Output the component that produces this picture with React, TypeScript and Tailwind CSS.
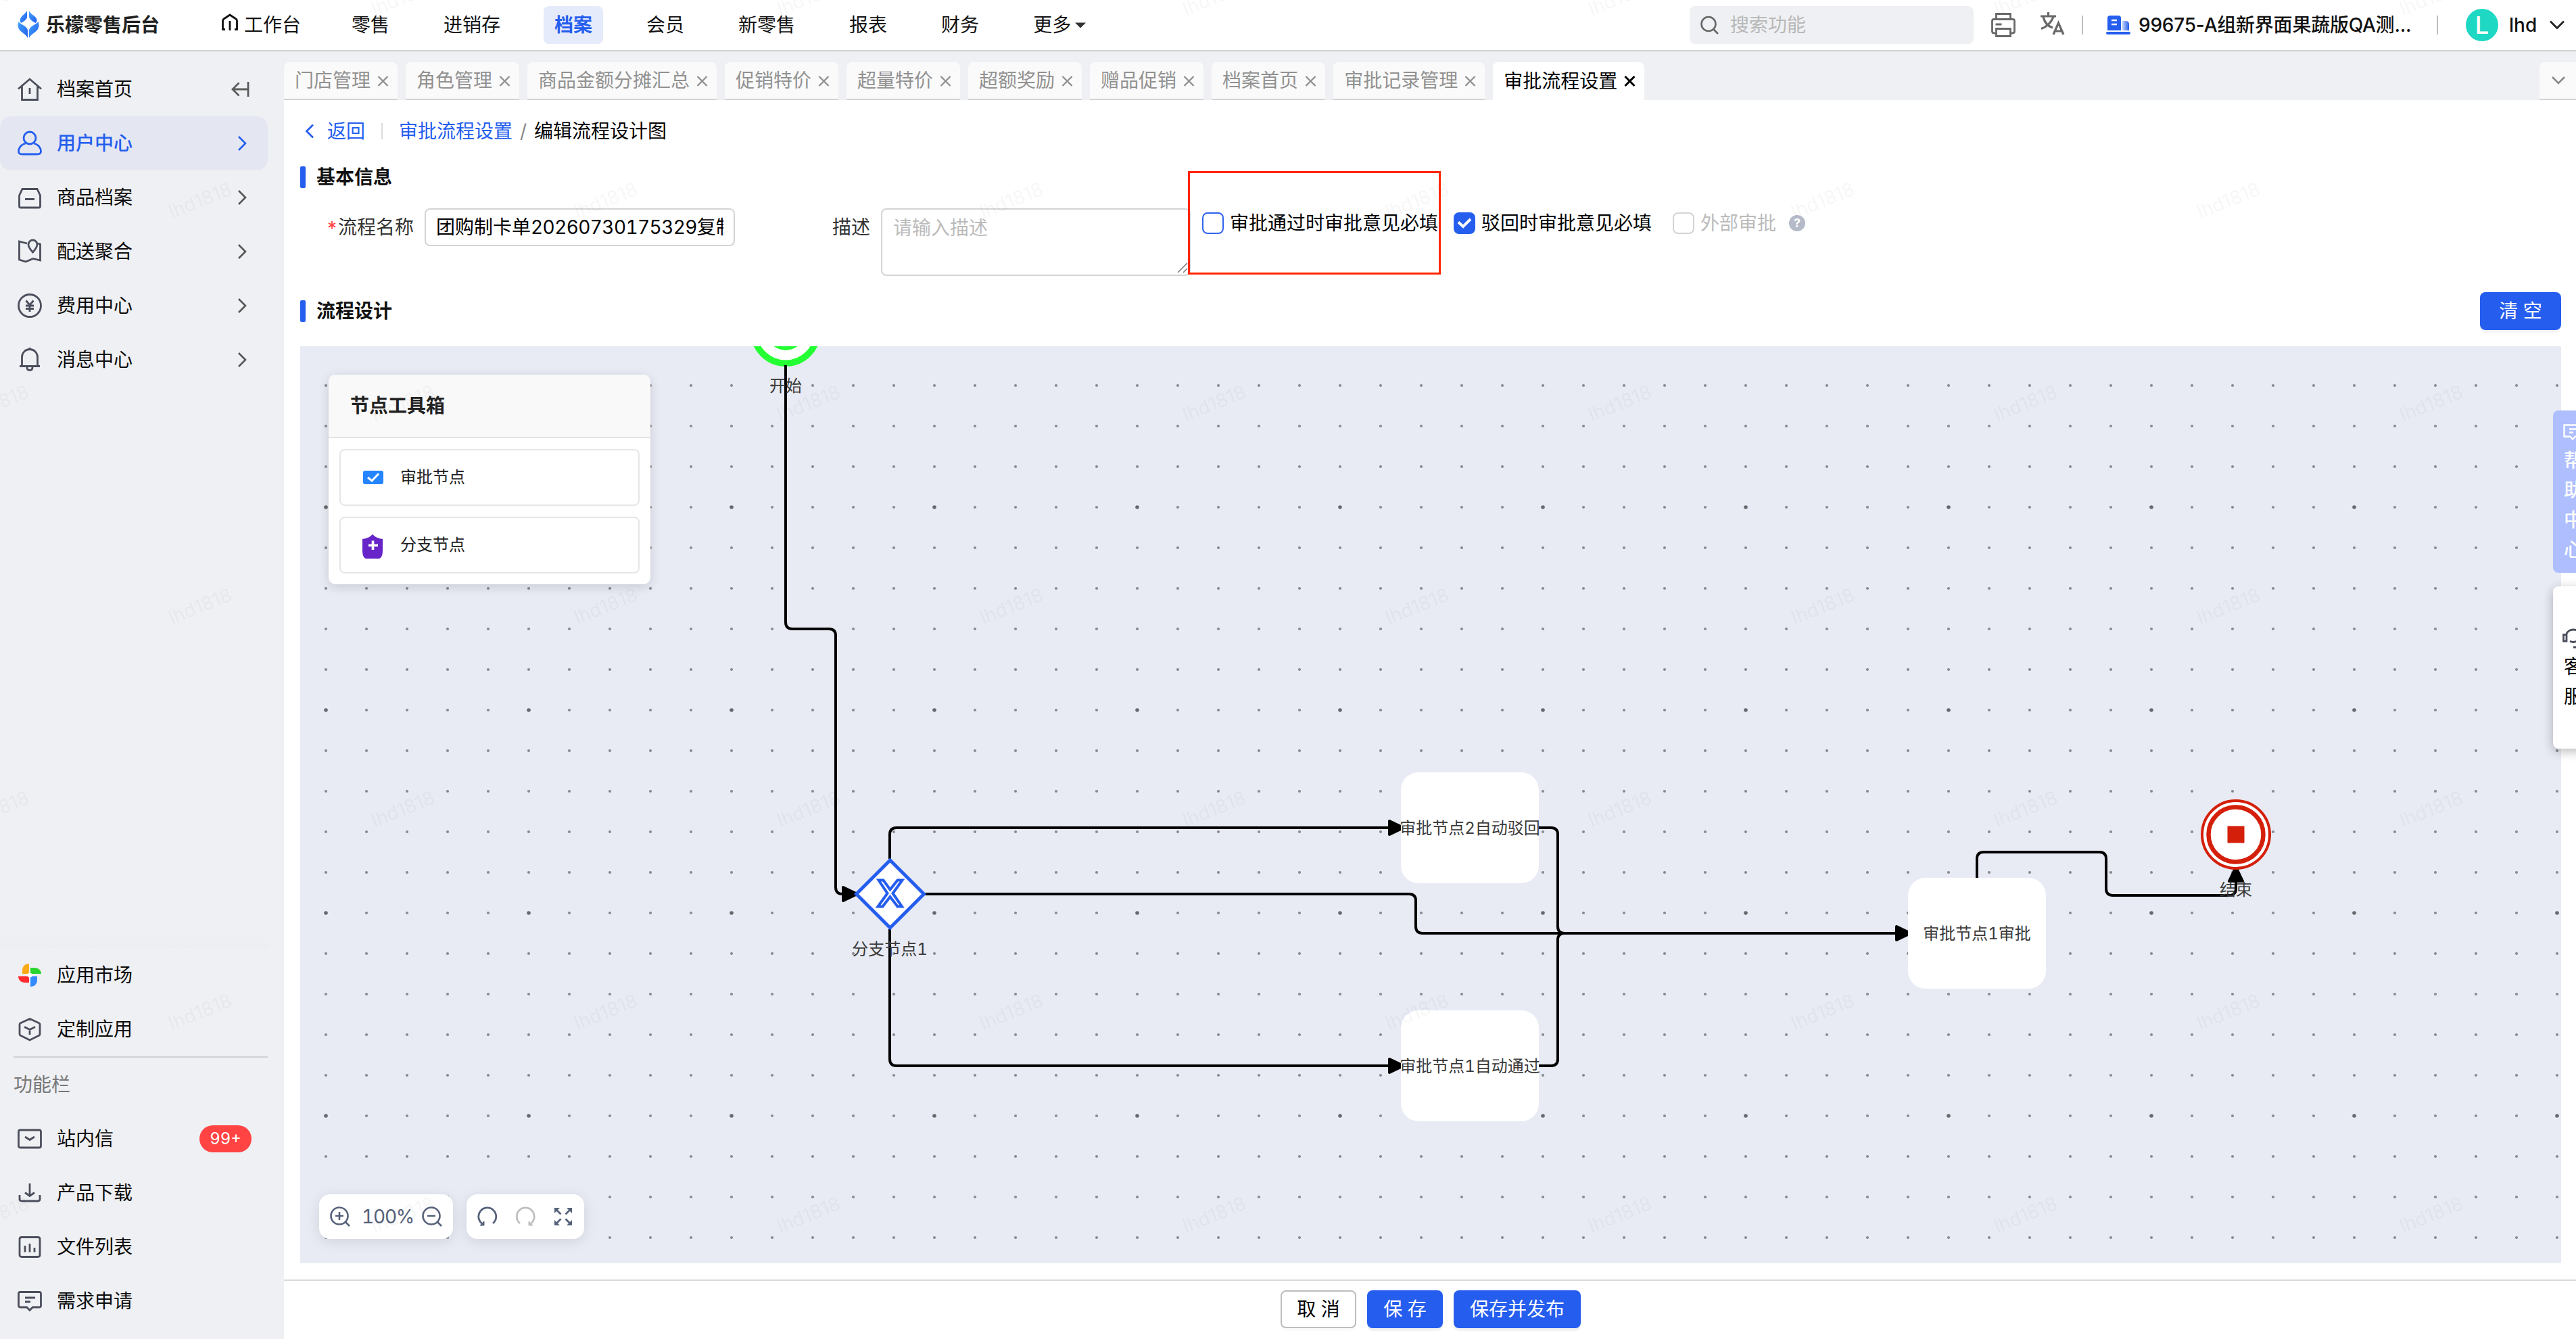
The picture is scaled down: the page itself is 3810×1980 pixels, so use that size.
import React from "react";

const NAV = ["零售", "进销存", "档案", "会员", "新零售", "报表", "财务"];

const TABS = [
  "门店管理",
  "角色管理",
  "商品金额分摊汇总",
  "促销特价",
  "超量特价",
  "超额奖励",
  "赠品促销",
  "档案首页",
  "审批记录管理",
  "审批流程设置",
];

function SideIcon({ name }: { name: string }) {
  const shapes: Record<string, React.ReactNode> = {
    home: <path d="M2 18.500L19 4L36 18.500M7.500 15V34.500H30.500V15M19 17V26" />,
    user: (
      <>
        <circle cx="19" cy="11" r="9" />
        <path d="M13 19C6 20.500 2.500 26 2.500 31C2.500 34 4.500 35 8 35H30C33.500 35 35.500 34 35.500 31C35.500 26 32 20.500 25 19" />
      </>
    ),
    archive: <path d="M8 6.500H30L34.500 16V32Q34.500 34 32.500 34H5.500Q3.500 34 3.500 32V16ZM12 21.500H26" />,
    delivery: (
      <path d="M15 7L3.500 4V31L13 34L24 29.500L34.500 32V8L31 7M23.500 20C19 15 17 12 17 8.500A6.500 6.500 0 0 1 30 8.500C30 12 28 15 23.500 20Z" />
    ),
    fee: (
      <>
        <circle cx="19" cy="19" r="16.500" />
        <path d="M13.500 11.500L19 18L24.500 11.500M19 18V28M13 19H25M13 23.500H25" />
      </>
    ),
    bell: <path d="M7.500 28V15A11.500 11.500 0 0 1 30.500 15V28M4 28.500H34M15 30Q15 34.500 19 34.500Q23 34.500 23 30M19 1V4" />,
    box: <path d="M19 3.500L33 10Q34 10.500 34 12V26Q34 27.500 33 28L19 35L5 28Q4 27.500 4 26V12Q4 10.500 5 10ZM11 15.500L19 19.500L27 15.500M19 19.500V27" />,
    mail: <path d="M5 6H33Q35.500 6 35.500 8.500V29.500Q35.500 32 33 32H5Q2.500 32 2.500 29.500V8.500Q2.500 6 5 6ZM12 16L19 20.500L26 16" />,
    download: <path d="M19 5V23M12 18.500L19 23.500L26 18.500M4 22V28Q4 31 7 31H31Q34 31 34 28V22" />,
    chart: <path d="M7 4.500H31Q34 4.500 34 7.500V30.500Q34 33.500 31 33.500H7Q4 33.500 4 30.500V7.500Q4 4.500 7 4.500ZM12 17V26.500M19 14V26.500M26 20V26.500" />,
    feedback: <path d="M5 5.500H33Q35.500 5.500 35.500 8V26Q35.500 28 33 28H23.500L19 32.500L14.500 28H5Q2.500 28 2.500 26V8Q2.500 5.500 5 5.500ZM12 14H27M12 20H20" />,
  };
  if (name === "market") {
    return (
      <svg className="size-[38px] shrink-0" viewBox="0 0 38 38">
        <path fill="#fcab17" d="M18 2V17H8V12C8 6 12 2 18 2Z" />
        <path fill="#2bd52f" d="M20 8H26C32 8 36 12 36 17H20Z" />
        <path fill="#ff2b2f" d="M18 30H12C6 30 2 26 2 20.500H18Z" />
        <path fill="#338bff" d="M20 36V20.500H30V26C30 32 26 36 20 36Z" />
        <circle cx="19" cy="19" r="3.500" fill="#fff" />
      </svg>
    );
  }
  return (
    <svg className="size-[38px] shrink-0" viewBox="0 0 38 38" fill="none" stroke="currentColor" strokeWidth="2.800">
      {shapes[name]}
    </svg>
  );
}

function SideRow({ icon, label, active, arrow, badge }: { icon: string; label: string; active?: boolean; arrow?: boolean; badge?: string }) {
  return (
    <div
      className={
        active
          ? "flex h-20 w-[396px] items-center rounded-[16px] bg-[#e4e7f2] pl-[25px] text-[#255eee]"
          : "flex h-20 w-[396px] items-center pl-[25px] text-[#4b4e5c]"
      }
    >
      <SideIcon name={icon} />
      <span className={active ? "ml-[21px] font-medium" : "ml-[21px] text-[#0b0b0b]"}>{label}</span>
      {icon === "home" && (
        <svg className="mr-[27px] ml-auto h-6 w-7" viewBox="0 0 28 24" fill="none" stroke="#5c5c5c" strokeWidth="2.800">
          <path d="M26 1V23M26 12H3M12.500 2.500L3 12L12.500 21.500" />
        </svg>
      )}
      {arrow && (
        <svg className="mr-[30px] ml-auto h-6 w-4" viewBox="0 0 16 24" fill="none" stroke={active ? "#255eee" : "#555"} strokeWidth="2.600">
          <path d="M3 2L13 12L3 22" />
        </svg>
      )}
      {badge && (
        <span className="mr-6 ml-auto flex h-10 w-[77px] items-center justify-center rounded-full bg-[#ff4443] text-[24px] text-white">{badge}</span>
      )}
    </div>
  );
}

function Header() {
  return (
    <header className="flex h-[76px] shrink-0 items-center border-b-2 border-[#d0d1d3] bg-white pr-4">
      <svg className="mt-[-3px] ml-[26px] h-[42px] w-8 shrink-0" viewBox="0 0 32 42">
        <defs>
          <linearGradient id="logo" x1="0" y1="0" x2="1" y2="1">
            <stop offset="0" stopColor="#45a4ff" />
            <stop offset="1" stopColor="#1f5df0" />
          </linearGradient>
        </defs>
        <path fill="url(#logo)" d="M14 1V11C13 14 9 17 5 19C3 16 3 14 5 11C7 7 11 6 14 1Z" />
        <path fill="url(#logo)" d="M17 1C19 6 24 7 27 11C29 14 29 16 27 19C22 17 18 14 17 10Z" />
        <path fill="url(#logo)" d="M1.500 17C4 21 13 23 15 29V41C12 35 5 33 2 28C0 24 0 21 1.500 17Z" />
        <path fill="url(#logo)" d="M30.500 17C28 21 19 23 17 29V41C20 35 27 33 30 28C32 24 32 21 30.500 17Z" />
      </svg>
      <div className="ml-[10px] w-[170px] font-bold text-[#222]">乐檬零售后台</div>
      <div className="ml-[89px] flex items-center">
        <svg className="mt-[-8px] h-[26px] w-[26px]" viewBox="0 0 26 26" fill="none" stroke="#111" strokeWidth="2.800">
          <path d="M6 23.500H2.500V11Q2.500 9 4 8L13 2L22 8Q23.500 9 23.500 11V23.500H20M13 11V25" />
        </svg>
        <span className="ml-2">工作台</span>
      </div>
      <nav className="ml-[59px] flex gap-12">
        {NAV.map((n) => (
          <span
            key={n}
            className={
              n === "档案"
                ? "flex h-14 items-center rounded-lg bg-[#e6ebfb] px-4 font-bold text-[#255eee]"
                : "flex h-14 items-center px-4"
            }
          >
            {n}
          </span>
        ))}
        <span className="flex h-14 items-center pl-4">
          更多
          <svg className="ml-[6px] h-[9px] w-4" viewBox="0 0 16 9">
            <path d="M0 0.500H16L8 8.500Z" fill="#333" />
          </svg>
        </span>
      </nav>
      <div className="ml-auto flex h-14 w-[420px] items-center rounded-lg bg-[#eff0f3] pl-4 text-[#b8b8b8]">
        <svg className="mt-[-1px] size-7" viewBox="0 0 28 28" fill="none" stroke="#666" strokeWidth="2.600">
          <circle cx="12" cy="12.500" r="10.500" />
          <path d="M19.500 20.500L26 27" />
        </svg>
        <span className="ml-4">搜索功能</span>
      </div>
      <svg className="ml-[26px] h-9 w-9" viewBox="0 0 36 36" fill="none" stroke="#686868" strokeWidth="2.800">
        <path d="M7.500 9V1.500H28.500V9M7.500 30H4Q1.500 30 1.500 27V12Q1.500 9.500 4 9.500H32Q34.500 9.500 34.500 12V27Q34.500 30 32 30H28.500M7.500 23.500H28.500V34.500H7.500ZM6.500 17H15.500" />
      </svg>
      <svg className="mt-[-4px] ml-9 h-9 w-[37px]" viewBox="0 0 37 36" fill="none" stroke="#686868" strokeWidth="3.200">
        <path d="M12.500 1V6M1 7H24M5 8C7 16 12 22 19 24M20 8C17 16 10 23 2 25.500M20 34L27.500 17L35 34M22 29H33" />
      </svg>
      <div className="ml-[25px] h-7 w-[2px] bg-[#bdbdbd]" />
      <svg className="ml-[34px] h-7 w-9" viewBox="0 0 36 28">
        <defs>
          <linearGradient id="wing">
            <stop offset="0" stopColor="#c3d2fb" />
            <stop offset="1" stopColor="#255eee" />
          </linearGradient>
        </defs>
        <path fill="#255eee" d="M2 22V4Q2 0 6 0H18Q22 0 22 4V22Z" />
        <path fill="url(#wing)" d="M24 22V8H29Q34 8 34 13V22Z" />
        <rect y="24" width="36" height="4" rx="2" fill="#255eee" />
        <path stroke="#fff" strokeWidth="2.500" d="M8 7H16M8 13H16" />
      </svg>
      <span className="ml-3 w-[404px] font-medium tracking-[-0.22px] whitespace-nowrap normal-nums">99675-A组新界面果蔬版QA测...</span>
      <div className="ml-[37px] h-7 w-[2px] bg-[#bdbdbd]" />
      <div className="ml-[41px] flex size-12 items-center justify-center rounded-full bg-[#1fd8c3] text-[36px] font-medium text-white">L</div>
      <span className="ml-4 w-[43px] font-medium">lhd</span>
      <svg className="ml-4 h-4 w-6" viewBox="0 0 24 16" fill="none" stroke="#222" strokeWidth="2.800">
        <path d="M2 2.500L12 12.500L22 2.500" />
      </svg>
    </header>
  );
}

function Sidebar() {
  return (
    <aside className="flex w-[420px] shrink-0 flex-col bg-[#eff0f3] py-4">
      <SideRow icon="home" label="档案首页" />
      <SideRow icon="user" label="用户中心" active arrow />
      <SideRow icon="archive" label="商品档案" arrow />
      <SideRow icon="delivery" label="配送聚合" arrow />
      <SideRow icon="fee" label="费用中心" arrow />
      <SideRow icon="bell" label="消息中心" arrow />
      <div className="mt-auto h-4 w-[396px] bg-gradient-to-b from-[#eff0f3] to-[#edeef1]" />
      <SideRow icon="market" label="应用市场" />
      <SideRow icon="box" label="定制应用" />
      <div className="ml-5 h-[2px] w-[376px] bg-[#d0d1d4]" />
      <div className="flex h-20 items-center pl-5 text-[#777]">功能栏</div>
      <SideRow icon="mail" label="站内信" badge="99+" />
      <SideRow icon="download" label="产品下载" />
      <SideRow icon="chart" label="文件列表" />
      <SideRow icon="feedback" label="需求申请" />
    </aside>
  );
}

function TabBar() {
  return (
    <div className="flex h-[72px] shrink-0 gap-3 bg-[#eff0f3] pt-4">
      {TABS.map((t, i) => {
        const active = i === TABS.length - 1;
        return (
          <div
            key={t}
            className={
              active
                ? "flex h-14 items-center rounded-t-lg bg-white pl-4 text-black"
                : "flex h-14 items-center rounded-t-lg border-b-2 border-[#d2d3d4] bg-[#fafafa] pl-4 text-[#919191]"
            }
          >
            <span className="whitespace-nowrap">{t}</span>
            <svg className={active ? "mr-[13px] ml-[10px] h-4 w-[17px]" : "mr-[13px] ml-[10px] h-4 w-[17px] translate-y-px"} viewBox="0 0 17 16" stroke="currentColor" strokeWidth={active ? 3 : 2.4}>
              <path d="M1.500 1L15.500 15M15.500 1L1.500 15" />
            </svg>
          </div>
        );
      })}
      <div className="ml-auto flex h-14 w-[54px] items-center rounded-tl-lg border-b-2 border-[#d2d3d4] bg-[#fafafa] pl-[17px]">
        <svg className="h-3 w-[22px]" viewBox="0 0 22 12" fill="none" stroke="#888" strokeWidth="2.600">
          <path d="M2 1L11 10L20 1" />
        </svg>
      </div>
    </div>
  );
}

function SectionTitle({ children }: { children: React.ReactNode }) {
  return (
    <div className="flex items-center">
      <span className="h-8 w-2 rounded-[2px] bg-[#255eee]" />
      <span className="ml-4 font-bold text-[#111]">{children}</span>
    </div>
  );
}

function Check({ checked, disabled }: { checked?: boolean; disabled?: boolean }) {
  if (checked) {
    return (
      <span className="flex size-8 items-center justify-center rounded-lg bg-[#255eee]">
        <svg className="h-4 w-[22px]" viewBox="0 0 22 16" fill="none" stroke="#fff" strokeWidth="4">
          <path d="M2 6.500L9 13L20 2" />
        </svg>
      </span>
    );
  }
  return <span className={disabled ? "size-8 rounded-lg border-2 border-[#d4d4d4] bg-white" : "size-8 rounded-lg border-2 border-[#2f64ee] bg-white"} />;
}

function BasicForm() {
  return (
    <div className="relative flex h-[148px] pt-6">
      <div className="flex h-14 w-[184px] items-center justify-end pr-4 text-[#333]">
        <span className="mt-1 text-[#ff4443] normal-nums">*</span>
        <span className="ml-[2px]">流程名称</span>
      </div>
      <div className="flex h-14 w-[459px] items-center rounded-lg border-2 border-[#d4d4d4] px-[15px] text-black">
        <span className="w-[425px] overflow-hidden whitespace-nowrap">
          团购制卡单<span className="tracking-[-0.6px]">20260730175329</span>复制
        </span>
      </div>
      <div className="flex h-14 w-[216px] items-center justify-end pr-4 text-[#333]">描述</div>
      <div className="relative h-[100px] w-[458px] rounded-lg border-2 border-[#d4d4d4] pt-[7px] pl-[16px] leading-10 text-[#bbb]">
        请输入描述
        <svg className="absolute right-[2px] bottom-[2px] size-4" viewBox="0 0 16 16" stroke="#777" strokeWidth="1.500">
          <path d="M1 15L15 1M9 15L15 9" />
        </svg>
      </div>
      <div className="mt-[6px] ml-[17px] flex h-8 items-center">
        <Check />
        <span className="ml-[9px] text-black">审批通过时审批意见必填</span>
        <span className="w-[23px]" />
        <Check checked />
        <span className="ml-[9px] text-black">驳回时审批意见必填</span>
        <span className="w-[31px]" />
        <Check disabled />
        <span className="ml-[9px] text-[#bbb]">外部审批</span>
        <span className="ml-[19px] flex size-6 items-center justify-center rounded-full bg-[#b4bac8] text-[18px] font-bold text-white">?</span>
      </div>
      <div className="absolute top-[-31px] left-[1313px] h-[153px] w-[374px] border-[3px] border-[#ff2600]" />
    </div>
  );
}

const EDGES = [
  "M1162 540V920Q1162 930 1172 930H1226Q1236 930 1236 940V1312Q1236 1322 1246 1322",
  "M1316 1270V1234Q1316 1224 1326 1224H2056",
  "M1316 1374V1566Q1316 1576 1326 1576H2056",
  "M1368 1322H2084Q2094 1322 2094 1332V1370Q2094 1380 2104 1380H2806",
  "M2276 1224H2294Q2304 1224 2304 1234V1370Q2304 1380 2314 1380",
  "M2276 1576H2294Q2304 1576 2304 1566V1390Q2304 1380 2314 1380",
  "M2924 1298V1270Q2924 1260 2934 1260H3105Q3115 1260 3115 1270V1314Q3115 1324 3125 1324H3297Q3307 1324 3307 1314V1300",
];

const ARROWS = [
  "M1247 1312V1332L1268 1322Z",
  "M2055 1214V1234L2076 1224Z",
  "M2055 1566V1586L2076 1576Z",
  "M2805 1370V1390L2826 1380Z",
  "M3297 1303H3317L3307 1282Z",
];

const CARDS = [
  { x: 2072, y: 1142, label: "审批节点2自动驳回" },
  { x: 2072, y: 1494, label: "审批节点1自动通过" },
  { x: 2822, y: 1298, label: "审批节点1审批" },
];

function FlowDiagram() {
  return (
    <svg className="absolute inset-0 h-full w-full" viewBox="444 512 3344 1356">
      <defs>
        <pattern id="dots" x="452" y="420" width="60" height="60" patternUnits="userSpaceOnUse">
          <circle cx="30" cy="30" r="2.100" fill="#888a90" />
        </pattern>
        <pattern id="major" x="452" y="420" width="300" height="300" patternUnits="userSpaceOnUse">
          <circle cx="30" cy="30" r="2.800" fill="#66686c" />
        </pattern>
      </defs>
      <rect x="444" y="512" width="3344" height="1356" fill="url(#dots)" />
      <rect x="444" y="512" width="3344" height="1356" fill="url(#major)" />
      <circle cx="1162" cy="490" r="47.250" fill="#fff" stroke="#23ff33" strokeWidth="9.500" />
      <circle cx="1162" cy="490" r="28" fill="#23ff33" />
      <g fill="none" stroke="#000" strokeWidth="4">
        {EDGES.map((d) => (
          <path key={d} d={d} />
        ))}
      </g>
      <g stroke="#000" strokeWidth="4" strokeLinejoin="round">
        {ARROWS.map((d) => (
          <path key={d} d={d} />
        ))}
      </g>
      <path d="M1316.500 1272L1366.500 1322L1316.500 1372L1266.500 1322Z" fill="#fff" stroke="#255eee" strokeWidth="5" />
      <path
        d="M1299.500 1301.500H1306.500L1316.500 1315.500L1327.500 1301.500H1334.500L1320.500 1321L1334 1340.500H1327.500L1316.500 1326L1305.500 1340.500H1298.500L1312.500 1321Z"
        fill="#fff"
        stroke="#255eee"
        strokeWidth="4"
      />
      {CARDS.map((c) => (
        <rect key={c.label} x={c.x} y={c.y} width="204" height="164" rx="26" fill="#fff" />
      ))}
      <circle cx="3307" cy="1234" r="50" fill="#fff" stroke="#d41f0b" strokeWidth="4" />
      <circle cx="3307" cy="1234" r="40.500" fill="#fff" stroke="#d41f0b" strokeWidth="6.500" />
      <rect x="3294.500" y="1221.500" width="25" height="25" fill="#d41f0b" />
      <g fill="#3a3a3a" fontSize="24" textAnchor="middle">
        {CARDS.map((c) => (
          <text key={c.label} x={c.x + 102} y={c.y + 91}>
            {c.label}
          </text>
        ))}
        <text x="1162" y="579">开始</text>
        <text x="1316" y="1412">分支节点1</text>
        <text x="3307" y="1324">结束</text>
      </g>
    </svg>
  );
}

function Toolbox() {
  return (
    <div className="absolute top-[42px] left-[42px] w-[476px] overflow-hidden rounded-[10px] bg-white pb-4 shadow-[0_4px_16px_rgba(0,0,0,0.14)]">
      <div className="flex h-[94px] items-center border-b-2 border-[#e4e4e4] bg-[#f9f9f9] pl-8 font-semibold text-[#222]">节点工具箱</div>
      <div className="mx-4 mt-4 flex h-[84px] items-center rounded-lg border-2 border-[#e6e6e6] pl-[33px] text-[24px] text-[#222]">
        <svg className="h-5 w-[30px]" viewBox="0 0 30 20">
          <rect width="30" height="20" rx="3" fill="#2585ff" />
          <path d="M7 10L13 15L23 4.500" fill="none" stroke="#fff" strokeWidth="3" />
        </svg>
        <span className="ml-[25px]">审批节点</span>
      </div>
      <div className="mx-4 mt-4 flex h-[84px] items-center rounded-lg border-2 border-[#e6e6e6] pl-[31px] text-[24px] text-[#222]">
        <svg className="mt-1 h-9 w-8" viewBox="0 0 32 36">
          <path fill="#6725c9" d="M16 0Q21 6 31 7V24Q31 34 26 36H6Q1 34 1 24V7Q11 6 16 0Z" />
          <path d="M16.500 9.500V23M10 16.500H24" stroke="#fff" strokeWidth="3.600" />
        </svg>
        <span className="ml-[25px]">分支节点</span>
      </div>
    </div>
  );
}

function ZoomBar() {
  return (
    <div className="absolute bottom-[36px] left-[28px] flex h-[66px] gap-5 text-[#56617a]">
      <div className="flex w-[198px] items-center rounded-[16px] bg-white pl-4 shadow-[0_4px_20px_rgba(0,0,0,0.10)]">
        <svg className="size-[30px]" viewBox="0 0 30 30" fill="none" stroke="currentColor" strokeWidth="2.600">
          <circle cx="14" cy="14" r="12.500" />
          <path d="M23 23L29 29M14 8V20M8 14H20" />
        </svg>
        <span className="ml-[17px] w-[78px] tracking-[-1.200px]">100%</span>
        <svg className="ml-[11px] size-[30px]" viewBox="0 0 30 30" fill="none" stroke="currentColor" strokeWidth="2.600">
          <circle cx="14" cy="14" r="12.500" />
          <path d="M23 23L29 29M8 14H20" />
        </svg>
      </div>
      <div className="flex w-[174px] items-center rounded-[16px] bg-white pl-4 shadow-[0_4px_20px_rgba(0,0,0,0.10)]">
        <svg className="size-[30px]" viewBox="0 0 30 30" fill="none" stroke="currentColor" strokeWidth="2.800">
          <path d="M8 26A13 13 0 1 1 23 25" />
          <path d="M4 28H10V22Z" fill="currentColor" strokeWidth="1" />
        </svg>
        <svg className="ml-[26px] size-[30px] text-[#bfbfbf]" viewBox="0 0 30 30" fill="none" stroke="currentColor" strokeWidth="2.800">
          <path d="M22 26A13 13 0 1 0 7 25" />
          <path d="M26 28H20V22Z" fill="currentColor" strokeWidth="1" />
        </svg>
        <svg className="ml-7 size-[26px]" viewBox="0 0 26 26" fill="none" stroke="currentColor" strokeWidth="2.800">
          <path d="M2 2L9.500 9.500M24 2L16.500 9.500M2 24L9.500 16.500M24 24L16.500 16.500" />
          <path d="M0 0H8L0 8ZM26 0H18L26 8ZM0 26H8L0 18ZM26 26H18L26 18Z" fill="currentColor" stroke="none" />
        </svg>
      </div>
    </div>
  );
}

function FloatingHelp() {
  return (
    <div className="absolute top-[607px] right-0 h-[240px] w-[34px] overflow-hidden rounded-l-lg bg-[#aebeff] pt-[20px] pl-[15px] leading-[44px] font-medium text-white">
      <svg className="mb-[8px] h-6 w-7" viewBox="0 0 28 24" fill="none" stroke="#fff" strokeWidth="2.400">
        <path d="M1.500 1.500H26.500V18.500H18L14 22.500L10.500 18.500H1.500ZM9 7.500H20M9 12.500H15" />
      </svg>
      {["帮", "助", "中", "心"].map((c) => (
        <div key={c} className="w-8 pl-px">{c}</div>
      ))}
    </div>
  );
}

function FloatingService() {
  return (
    <div className="absolute top-[843px] right-0 h-[290px] w-[54px] overflow-hidden pt-6 pl-5 leading-[44px]">
      <div className="h-[240px] w-[60px] rounded-l-lg bg-white pt-[60px] pl-[14px] text-black shadow-[0_4px_16px_rgba(0,0,0,0.28)]">
        <svg className="mb-[5px] h-8 w-8" viewBox="0 0 32 32" fill="none" stroke="#4b4e5c" strokeWidth="2.800">
          <path d="M5.500 11A11 10 0 0 1 26.500 11M6 11.500H1.500V21H6ZM26 11.500H30.500V21H26ZM11 21Q16 24 21 21M16 30H22" />
        </svg>
        <div className="pl-[2px]">客</div>
        <div className="pl-[2px]">服</div>
      </div>
    </div>
  );
}

function Watermark() {
  const small: [number, number][] = [];
  for (let r = -1; r < 7; r++) {
    for (let k = 0; k < 8; k++) small.push([(r % 2 === 0 ? 296 : -4) + k * 600, 296 + r * 300]);
  }
  const large: [number, number][] = [];
  for (let n = -3; n < 10; n++) {
    for (let m = -10; m < 5; m++) {
      const x = 2914 + m * 474 + n * 108;
      const y = 334 - m * 20 + n * 187;
      if (x > -150 && x < 3960 && y > -100 && y < 2080) large.push([x, y]);
    }
  }
  return (
    <svg className="pointer-events-none absolute inset-0 h-full w-full normal-nums" viewBox="0 0 3810 1980" textAnchor="middle">
      <g fill="#000" fillOpacity="0.055" fontSize="28">
        {small.map(([x, y]) => (
          <text key={`${x},${y}`} transform={`translate(${x} ${y}) rotate(-22)`} y="10">
            lhd1818
          </text>
        ))}
      </g>
      <g fill="#000" fillOpacity="0.009" fontSize="42">
        {large.map(([x, y]) => (
          <text key={`${x},${y}`} transform={`translate(${x} ${y}) rotate(-30)`} y="15">
            刘骅德-1818
          </text>
        ))}
      </g>
    </svg>
  );
}

export default function App() {
  return (
    <div className="relative flex h-[1980px] w-[3810px] flex-col overflow-hidden bg-white font-['Inter','Noto_Sans_CJK_SC',sans-serif] text-[28px] leading-10 text-[#111] tabular-nums">
      <Header />
      <div className="flex min-h-0 flex-1">
        <Sidebar />
        <main className="flex min-w-0 flex-1 flex-col">
          <TabBar />
          <div className="flex flex-1 flex-col pr-[22px] pl-6">
            <div className="flex h-[92px] items-center text-[#255eee]">
              <svg className="ml-[7px] h-[22px] w-[14px]" viewBox="0 0 14 22" fill="none" stroke="currentColor" strokeWidth="2.800">
                <path d="M12 1.500L2.500 11L12 20.500" />
              </svg>
              <span className="ml-[19px]">返回</span>
              <span className="ml-6 h-6 w-[2px] bg-[#dcdcdc]" />
              <span className="ml-6">审批流程设置</span>
              <span className="mx-[11px] w-[10px] text-center text-[#888]">/</span>
              <span className="text-black">编辑流程设计图</span>
            </div>
            <div className="flex h-11 items-center">
              <SectionTitle>基本信息</SectionTitle>
            </div>
            <BasicForm />
            <div className="flex h-14 items-center justify-between">
              <SectionTitle>流程设计</SectionTitle>
              <button className="h-14 w-[120px] rounded-lg bg-[#255eee] text-white shadow-[0_4px_0_rgba(0,0,0,0.04)]">清 空</button>
            </div>
            <div className="relative mt-6 h-[1356px] overflow-hidden bg-[#e8ebf4]">
              <FlowDiagram />
              <Toolbox />
              <ZoomBar />
            </div>
          </div>
          <footer className="flex h-[88px] shrink-0 gap-4 border-t-2 border-[#d9d9d9] pt-[14px] pl-[1474px]">
            <button className="h-14 w-28 rounded-lg border-2 border-[#bdbdbd] bg-white text-black shadow-[0_4px_0_rgba(0,0,0,0.02)]">取 消</button>
            <button className="h-14 w-28 rounded-lg bg-[#255eee] text-white shadow-[0_4px_0_rgba(0,0,0,0.05)]">保 存</button>
            <button className="h-14 w-[188px] rounded-lg bg-[#255eee] text-white shadow-[0_4px_0_rgba(0,0,0,0.05)]">保存并发布</button>
          </footer>
        </main>
      </div>
      <FloatingHelp />
      <FloatingService />
      <Watermark />
    </div>
  );
}
